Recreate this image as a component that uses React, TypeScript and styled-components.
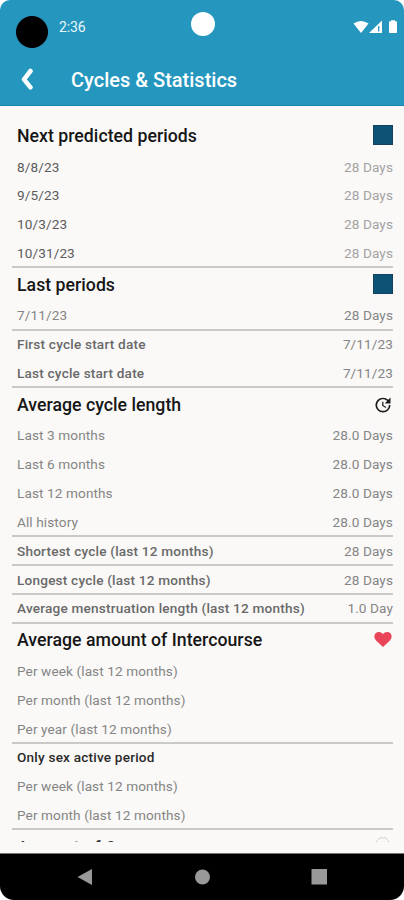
import React from "react";
import styled, { createGlobalStyle } from "styled-components";

const GlobalStyle = createGlobalStyle`
  * { box-sizing: border-box; }
  body { margin: 0; background: #fff; font-family: Roboto, "Liberation Sans", sans-serif; }
`;

const Phone = styled.div`
  width: 404px;
  height: 900px;
  display: flex;
  flex-direction: column;
  overflow: hidden;
  border-radius: 10px 10px 14px 14px;
  background: #faf9f8;
`;

const Header = styled.header`
  height: 106px;
  flex: none;
  background: #2596be;
  border-bottom: 1px solid #1786ae;
  color: #fff;
`;

const StatusBar = styled.div`
  height: 54px;
  display: grid;
  grid-template-columns: 1fr 24px 1fr;
  align-items: center;
  padding: 0 6px 0 16px;
`;

const StatusLeft = styled.div`
  display: flex;
  align-items: center;
  gap: 11px;
  padding-top: 9px;
`;

const Camera = styled.div`
  width: 32px;
  height: 32px;
  border-radius: 50%;
  background: #000;
`;

const Clock = styled.span`
  font-size: 14px;
  line-height: 16px;
  letter-spacing: -0.1px;
  margin-top: -10px;
  color: #e9f7fc;
`;

const Notch = styled.div`
  width: 24px;
  height: 24px;
  margin: -6px 0 0 -4px;
  border-radius: 50%;
  background: #fff;
`;

const StatusRight = styled.div`
  display: flex;
  justify-content: flex-end;
  margin: -1px -1px 0 0;
`;

const TitleBar = styled.div`
  height: 51px;
  display: flex;
  align-items: center;
  padding-left: 20px;
`;

const Title = styled.h1`
  margin: 0 0 0 36px;
  font-size: 20px;
  font-weight: 500;
  line-height: 24px;
`;

const Content = styled.main`
  height: 736px;
  flex: none;
  overflow: hidden;
  padding: 12.8px 11px 0 12px;
`;

const Heading = styled.div<{ $first?: boolean }>`
  height: ${(p) => (p.$first ? 34 : 33.5)}px;
  display: flex;
  align-items: center;
  justify-content: space-between;
  padding-left: 5px;
`;

const HeadingText = styled.h2`
  margin: 0;
  font-size: 17.7px;
  font-weight: 500;
  line-height: 22px;
  letter-spacing: 0.02px;
  color: #161616;
  white-space: nowrap;
`;

const Row = styled.div<{ $line?: boolean }>`
  height: 28.85px;
  display: flex;
  align-items: center;
  justify-content: space-between;
  padding: 0 0 1.4px 5px;
  font-size: 13.6px;
  letter-spacing: 0.1px;
  white-space: nowrap;
  box-shadow: ${(p) => (p.$line ? "inset 0 -2px #c9c9c8" : "none")};
`;

const Label = styled.span<{ $tone: Tone }>`
  color: ${(p) => ({ dark: "#5c5c5c", light: "#858585", bold: "#696969", strong: "#2a2a2a" })[p.$tone]};
  font-weight: ${(p) => (p.$tone === "bold" || p.$tone === "strong" ? 500 : 400)};
  letter-spacing: ${(p) => (p.$tone === "bold" || p.$tone === "strong" ? 0.2 : 0.1)}px;
`;

const Value = styled.span<{ $faint?: boolean }>`
  color: ${(p) => (p.$faint ? "#a3a3a3" : "#858585")};
`;

const Swatch = styled.div`
  width: 20px;
  height: 20px;
  margin-bottom: 2px;
  background: #0c5275;
  border: 1px solid #154260;
`;

const NavBar = styled.nav`
  flex: 1;
  margin-top: 11px;
  border-top: 1px solid #777;
  background: #000;
  display: flex;
  justify-content: space-between;
  align-items: center;
  padding: 0 76px 0 76px;
`;

type Tone = "dark" | "light" | "bold" | "strong";
type Mark = "swatch" | "clock" | "heart" | "spark";
type Entry = { label: string; value?: string; tone: Tone; faint?: boolean; line?: boolean };
type Section = { title: string; mark: Mark; rows: Entry[] };

const sections: Section[] = [
  {
    title: "Next predicted periods",
    mark: "swatch",
    rows: ["8/8/23", "9/5/23", "10/3/23", "10/31/23"].map((label, i) => ({
      label, value: "28 Days", tone: "dark" as Tone, faint: true, line: i === 3,
    })),
  },
  {
    title: "Last periods",
    mark: "swatch",
    rows: [
      { label: "7/11/23", value: "28 Days", tone: "light", line: true },
      { label: "First cycle start date", value: "7/11/23", tone: "bold" },
      { label: "Last cycle start date", value: "7/11/23", tone: "bold", line: true },
    ],
  },
  {
    title: "Average cycle length",
    mark: "clock",
    rows: [
      { label: "Last 3 months", value: "28.0 Days", tone: "light" },
      { label: "Last 6 months", value: "28.0 Days", tone: "light" },
      { label: "Last 12 months", value: "28.0 Days", tone: "light" },
      { label: "All history", value: "28.0 Days", tone: "light", line: true },
      { label: "Shortest cycle (last 12 months)", value: "28 Days", tone: "bold", line: true },
      { label: "Longest cycle (last 12 months)", value: "28 Days", tone: "bold", line: true },
      { label: "Average menstruation length (last 12 months)", value: "1.0 Day", tone: "bold", line: true },
    ],
  },
  {
    title: "Average amount of Intercourse",
    mark: "heart",
    rows: [
      { label: "Per week (last 12 months)", tone: "light" },
      { label: "Per month (last 12 months)", tone: "light" },
      { label: "Per year (last 12 months)", tone: "light", line: true },
      { label: "Only sex active period", tone: "strong" },
      { label: "Per week (last 12 months)", tone: "light" },
      { label: "Per month (last 12 months)", tone: "light", line: true },
    ],
  },
  { title: "Amount of Orgasms", mark: "spark", rows: [] },
];

const SparkIcon = styled.svg`
  margin-bottom: 4px;
`;

function MarkIcon({ mark }: { mark: Mark }) {
  if (mark === "swatch") return <Swatch />;
  if (mark === "clock")
    return (
      <svg width="20" height="20" viewBox="0 0 24 24" fill="#1c1c1c">
        <path d="M21 10.12h-6.78l2.74-2.82c-2.73-2.7-7.15-2.8-9.88-.1-2.73 2.71-2.73 7.08 0 9.79s7.15 2.71 9.88 0C18.32 15.65 19 14.08 19 12.1h2c0 1.98-.88 4.55-2.64 6.29-3.51 3.48-9.21 3.48-12.72 0-3.5-3.47-3.53-9.11-.02-12.58s9.14-3.47 12.65 0L21 3v7.12zM12.5 8v4.25l3.5 2.08-.72 1.21L11 13V8h1.5z" />
      </svg>
    );
  if (mark === "heart")
    return (
      <svg width="20" height="20" viewBox="0 0 24 24" fill="#ea4458">
        <path d="M12 20.300 4 12.900C1.300 10.300.9 6.800 2.700 4.500 5 1.500 9.500 1.600 12 4.900c2.500-3.300 7-3.400 9.300-.4 1.800 2.300 1.400 5.800-1.300 8.400Z" />
      </svg>
    );
  return (
    <SparkIcon width="20" height="20" viewBox="0 0 20 20" fill="none" stroke="#d5cccc" strokeWidth="1.2" strokeDasharray="2 1.5">
      <path d="M3 6 L8 1 L10 3 L12 1 L16 6" />
    </SparkIcon>
  );
}

const ClippedHeading = styled(Heading)`
  padding-top: 2px;
`;

const ClippedHeadingText = styled(HeadingText)`
  color: #333;
`;

export default function App() {
  return (
    <>
      <GlobalStyle />
      <Phone>
        <Header>
          <StatusBar>
            <StatusLeft>
              <Camera />
              <Clock>2:36</Clock>
            </StatusLeft>
            <Notch />
            <StatusRight>
              <svg width="46" height="16" viewBox="0 0 46 16" fill="#fff">
                <path d="M.5 4.500Q8 -.6 15.500 4.500L8 14Z" />
                <path d="M16 14 29 1.500V14Z" />
                <path d="M25.700 7v5.500" stroke="#2596be" strokeWidth="1.300" />
                <path d="M36 3q0-.7.700-.7H38V1.200h4v1.100h1.300q.7 0 .7.700v10.300q0 .7-.7.700h-6.600q-.7 0-.7-.7Z" />
              </svg>
            </StatusRight>
          </StatusBar>
          <TitleBar>
            <svg width="15" height="24" viewBox="0 0 15 24" fill="none" stroke="#fff" strokeWidth="4.500" strokeLinecap="round" strokeLinejoin="round">
              <path d="M10.500 3 4 11.300l6.500 8" />
            </svg>
            <Title>Cycles &amp; Statistics</Title>
          </TitleBar>
        </Header>
        <Content>
          {sections.map((section, i) => {
            const clipped = section.mark === "spark";
            const Bar = clipped ? ClippedHeading : Heading;
            const Text = clipped ? ClippedHeadingText : HeadingText;
            return (
              <React.Fragment key={section.title}>
                <Bar $first={i === 0}>
                  <Text>{section.title}</Text>
                  <MarkIcon mark={section.mark} />
                </Bar>
                {section.rows.map((row, j) => (
                  <Row key={j} $line={row.line}>
                    <Label $tone={row.tone}>{row.label}</Label>
                    {row.value && <Value $faint={row.faint}>{row.value}</Value>}
                  </Row>
                ))}
              </React.Fragment>
            );
          })}
        </Content>
        <NavBar>
          <svg width="18" height="18" viewBox="0 0 18 18" fill="#999">
            <path d="M1.500 9 16 1v16Z" />
          </svg>
          <svg width="16" height="16" viewBox="0 0 16 16" fill="#999">
            <circle cx="8.500" cy="8" r="7.500" />
          </svg>
          <svg width="18" height="18" viewBox="0 0 18 18" fill="#999">
            <path d="M1.500 1h15.500v15.500H1.500Z" />
          </svg>
        </NavBar>
      </Phone>
    </>
  );
}
